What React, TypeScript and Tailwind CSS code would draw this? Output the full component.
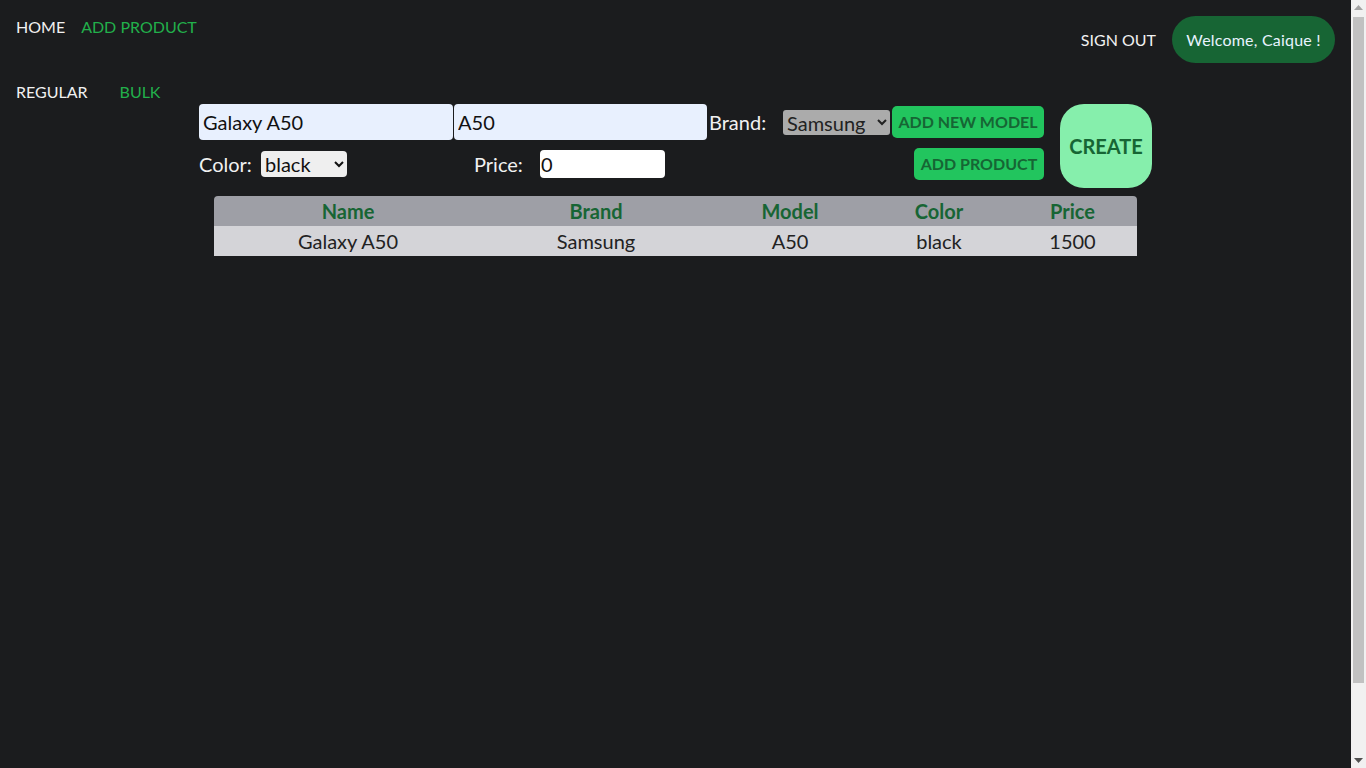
import { useState } from "react";

const rows = [
  { name: "Galaxy A50", brand: "Samsung", model: "A50", color: "black", price: "1500" },
];

// Window scrollbar as it shows in the screenshot (the page is a bit taller than the viewport)
function Scrollbar() {
  return (
    <div className="flex h-full w-[15px] flex-col bg-[#f1f1f1]">
      <div className="flex h-[15px] items-center justify-center">
        <svg width="9" height="5" viewBox="0 0 9 5">
          <path d="M0 5 L4.5 0 L9 5 Z" fill="#a3a3a3" />
        </svg>
      </div>
      <div className="mx-[2px] mt-[2px] h-[666px] bg-[#c1c1c1]" />
      <div className="flex-1" />
      <div className="flex h-[15px] items-center justify-center">
        <svg width="9" height="5" viewBox="0 0 9 5">
          <path d="M0 0 L9 0 L4.5 5 Z" fill="#505050" />
        </svg>
      </div>
    </div>
  );
}

export default function App() {
  const [name, setName] = useState("Galaxy A50");
  const [model, setModel] = useState("A50");
  const [price, setPrice] = useState("0");

  return (
    <div
      className="flex h-screen overflow-hidden bg-[#1b1c1e] text-[#f1f1f1]"
      style={{ fontFamily: "Lato, 'Open Sans', sans-serif" }}
    >
      <main className="flex-1">
        {/* Top nav */}
        <header className="flex h-[79px] items-start justify-between">
          <nav className="flex gap-4 pl-4 pt-[15px] text-base leading-6">
            <a className="text-[#f1f1f1]">HOME</a>
            <a className="text-[#22b04b]">ADD PRODUCT</a>
          </nav>
          <div className="mr-4 mt-4 flex items-center gap-4">
            <a className="text-base">SIGN OUT</a>
            <div className="flex h-[47px] w-[163px] items-center justify-center rounded-full bg-[#176534] text-base tracking-[0.2px] text-[#e8f3ff]">
              Welcome, Caique !
            </div>
          </div>
        </header>

        {/* Sub nav */}
        <nav className="flex h-[25px] items-center gap-8 pl-4 text-base">
          <a>REGULAR</a>
          <a className="text-[#22b04b]">BULK</a>
        </nav>

        {/* Form */}
        <div className="flex justify-center">
          <div className="flex w-[953px] gap-4">
            <div className="flex flex-1 flex-col gap-2">
              <div className="flex items-center">
                <input
                  value={name}
                  onChange={(e) => setName(e.target.value)}
                  className="h-9 w-[254px] rounded-[4px] bg-[#e8f0fe] px-1 text-xl text-[#111]"
                />
                <input
                  value={model}
                  onChange={(e) => setModel(e.target.value)}
                  className="ml-px h-9 w-[253px] rounded-[4px] bg-[#e8f0fe] px-1 text-xl text-[#111]"
                />
                <span className="ml-[2px] w-[74px] text-xl">Brand:</span>
                <select className="h-[25px] w-[107px] rounded-[3px] bg-[#ababab] text-xl text-[#222]">
                  <option>Samsung</option>
                </select>
                <button className="ml-[2px] h-8 w-[152px] rounded-[5px] bg-[#22c55e] text-base font-bold text-[#166534]">
                  ADD NEW MODEL
                </button>
              </div>
              <div className="flex items-center">
                <span className="w-[62px] text-xl">Color:</span>
                <select className="h-[26px] w-[86px] rounded-[4px] bg-[#efefef] text-xl text-[#111]">
                  <option>black</option>
                </select>
                <span className="ml-[127px] w-[66px] text-xl">Price:</span>
                <input
                  value={price}
                  onChange={(e) => setPrice(e.target.value)}
                  className="h-7 w-[125px] rounded-[4px] bg-white px-px text-xl text-[#111]"
                />
                <button className="ml-auto h-8 w-[130px] rounded-[5px] bg-[#22c55e] text-base font-bold text-[#166534]">
                  ADD PRODUCT
                </button>
              </div>
            </div>
            <button className="h-[84px] w-[92px] rounded-3xl bg-[#86efac] text-xl font-bold text-[#166534]">
              CREATE
            </button>
          </div>
        </div>

        {/* Table */}
        <div className="mt-2 flex justify-center">
          <table className="w-[923px] border-collapse text-xl">
            <thead>
              <tr className="h-[30px] bg-[#9e9fa6] text-[#176534]">
                <th className="w-[268px] rounded-tl-[4px] font-bold">Name</th>
                <th className="w-[228px] font-bold">Brand</th>
                <th className="w-[160px] font-bold">Model</th>
                <th className="w-[138px] font-bold">Color</th>
                <th className="w-[129px] rounded-tr-[4px] font-bold">Price</th>
              </tr>
            </thead>
            <tbody>
              {rows.map((r) => (
                <tr key={r.name} className="h-[30px] bg-[#d4d4d8] text-center text-[#222]">
                  <td>{r.name}</td>
                  <td>{r.brand}</td>
                  <td>{r.model}</td>
                  <td>{r.color}</td>
                  <td>{r.price}</td>
                </tr>
              ))}
            </tbody>
          </table>
        </div>
      </main>
      <Scrollbar />
    </div>
  );
}
